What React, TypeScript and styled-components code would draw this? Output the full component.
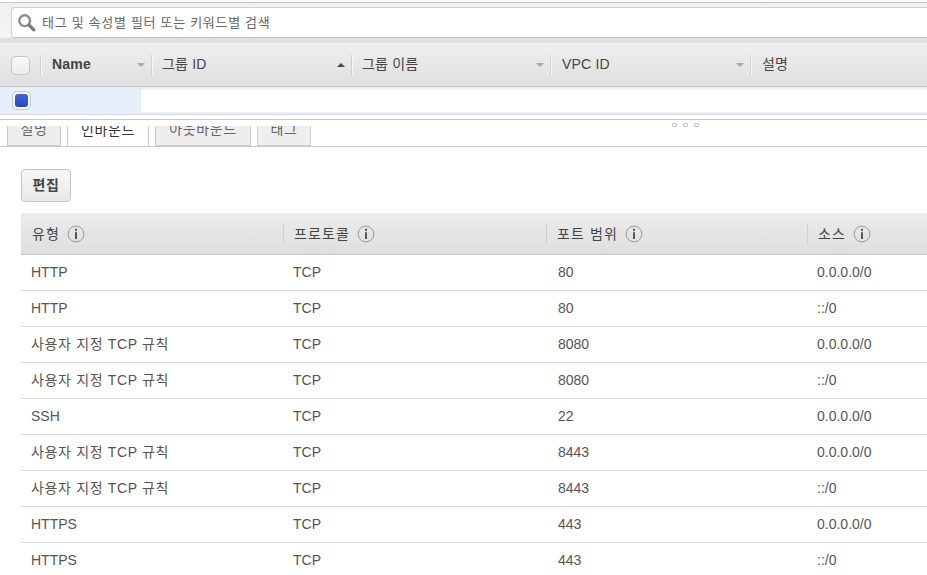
import React from "react";
import styled, { createGlobalStyle } from "styled-components";

const Global = createGlobalStyle`
  html, body { margin: 0; padding: 0; height: 575px; overflow: hidden; background: #fff; }
  body { font-family: "Liberation Sans", "Noto Sans CJK KR", sans-serif; color: #444; }
`;

const Page = styled.div`
  width: 927px;
  height: 575px;
  overflow: hidden;
  display: flex;
  flex-direction: column;
  & > * { flex: none; }
`;

const SearchBand = styled.div`
  margin-top: 2px;
  height: 41px;
  box-sizing: border-box;
  background: linear-gradient(#f0f0f0 0, #f4f4f4 35px, #dfdfdf 35px);
  border-top: 1px solid #c8c8c8;
  padding: 4px 0 0 11px;
`;

const SearchBox = styled.div`
  height: 31px;
  box-sizing: border-box;
  background: #fff;
  border: 1px solid #d0d0d0;
  border-bottom-color: #c4c4c4;
  border-right: none;
  border-radius: 4px 0 0 4px;
  display: flex;
  align-items: center;
  gap: 6px;
  padding-left: 6px;
  font-size: 13px;
  line-height: 16px;
  color: #666;
  letter-spacing: 0.7px;
`;

const HeaderGrid = styled.div`
  display: grid;
  grid-template-columns: 40px 111px 200px 199px 200px 1fr;
  height: 44px;
  box-sizing: border-box;
  border-top: 1px solid #f4f4f4;
  border-bottom: 1px solid #c4c4c4;
  background: linear-gradient(#efefef, #dfdfdf);
`;

const HeadCell = styled.div<{ $first?: boolean }>`
  display: flex;
  align-items: center;
  justify-content: space-between;
  height: 20px;
  margin-top: 11px;
  padding: 0 6px 0 11px;
  border-left: 1px solid #cfcfcf;
  font-size: 14px;
  line-height: 16px;
  font-weight: ${(p) => (p.$first ? 700 : 400)};
  color: #444;
  box-shadow: inset 1px 0 0 #f6f6f6;
`;

const HeadLabel = styled.span<{ $pull?: boolean }>`
  letter-spacing: 0.2px;
  margin-left: ${(p) => (p.$pull ? "-1px" : "0")};
  margin-top: -2px;
`;

const CheckCell = styled.div`
  display: flex;
  align-items: center;
  padding-left: 11px;
`;

const Check = styled.span<{ $on?: boolean }>`
  width: 19px;
  height: 19px;
  box-sizing: border-box;
  border: 1px solid #c6c6c6;
  border-radius: 5px;
  background: ${(p) => (p.$on ? "#f3f3f3" : "linear-gradient(#f9f9f9,#ececec)")};
  display: flex;
  align-items: center;
  justify-content: center;
`;

const CheckDot = styled.span`
  width: 13px;
  height: 13px;
  border-radius: 3px;
  background: linear-gradient(#3d66d6, #2446c0);
`;

const Arrow = styled.span<{ $up?: boolean }>`
  width: 0;
  height: 0;
  border-left: 4px solid transparent;
  border-right: 4px solid transparent;
  ${(p) => (p.$up ? "border-bottom: 4px solid #444;" : "border-top: 4px solid #aaa;")}
`;

const SelectedRow = styled.div`
  height: 28px;
  box-sizing: border-box;
  background: #e7effb;
  padding: 2px 0;
  border-bottom: 1px solid #d3d9e2;
  display: flex;
`;

const SelectedName = styled.div`
  width: 141px;
  padding-left: 12px;
  box-sizing: border-box;
  display: flex;
  align-items: center;
`;

const SelectedRest = styled.div`
  flex: 1;
  background: #fff;
`;

const Splitter = styled.div`
  position: relative;
  margin-top: 4px;
  height: 1px;
  background: #c8c8c8;
`;

const Grips = styled.div`
  position: absolute;
  left: 672px;
  top: 4px;
  display: flex;
  gap: 6px;
`;

const Grip = styled.span`
  width: 3px;
  height: 2px;
  border: 1px solid #c4c4c4;
  border-radius: 1px;
`;

const TabStrip = styled.div`
  height: 21px;
  margin-top: 6px;
  box-sizing: border-box;
  overflow: hidden;
  border-bottom: 1px solid #c8c8c8;
  display: flex;
  align-items: flex-end;
  padding-left: 7px;
  gap: 6px;
`;

const Tab = styled.div<{ $active?: boolean; $w: number }>`
  width: ${(p) => p.$w}px;
  height: 36px;
  flex: none;
  box-sizing: border-box;
  padding-top: 10px;
  margin-bottom: ${(p) => (p.$active ? "-1px" : "0")};
  background: ${(p) => (p.$active ? "#fff" : "#eee")};
  border: 1px solid #ccc;
  border-bottom: ${(p) => (p.$active ? "none" : "1px solid #ccc")};
  text-align: center;
  font-size: 14px;
  line-height: 16px;
  letter-spacing: 0.6px;
  color: ${(p) => (p.$active ? "#333" : "#666")};
`;

const Toolbar = styled.div`
  padding: 22px 0 11px 21px;
`;

const EditButton = styled.button`
  display: block;
  width: 50px;
  height: 33px;
  padding: 0 0 2px;
  border: 1px solid #c6c6c6;
  border-radius: 4px;
  background: linear-gradient(#f7f7f7, #e9e9e9);
  font: 700 14px/16px "Liberation Sans", "Noto Sans CJK KR", sans-serif;
  letter-spacing: 0.6px;
  color: #444;
`;

const RuleTable = styled.div`
  margin-left: 21px;
  display: flex;
  flex-direction: column;
`;

const RuleHead = styled.div`
  display: grid;
  grid-template-columns: 262px 263px 261px 1fr;
  height: 42px;
  box-sizing: border-box;
  border-bottom: 1px solid #c4c4c4;
  background: linear-gradient(#ececec, #dedede);
  align-items: center;
`;

const RuleHeadCell = styled.div<{ $first?: boolean }>`
  display: flex;
  align-items: center;
  gap: 7px;
  height: 20px;
  padding-left: 10px;
  border-left: 1px solid ${(p) => (p.$first ? "transparent" : "#cfcfcf")};
  font-size: 14px;
  line-height: 16px;
  color: #444;
  letter-spacing: 1.1px;
`;

const RuleRow = styled.div`
  display: grid;
  grid-template-columns: 262px 265px 259px 1fr;
  height: 36px;
  flex: none;
  box-sizing: border-box;
  border-bottom: 1px solid #ddd;
  align-items: center;
  font-size: 14px;
  line-height: 16px;
  color: #555;
`;

const RuleCell = styled.div<{ $wide?: boolean }>`
  padding: 0 0 2px 10px;
  letter-spacing: ${(p) => (p.$wide ? "0.65px" : "0")};
`;

const InfoIcon = () => (
  <svg width="18" height="18" viewBox="0 0 18 18" aria-hidden="true">
    <circle cx="9" cy="9" r="7.9" fill="none" stroke="#9a9a9a" strokeWidth="1" />
    <rect x="8" y="7.2" width="2" height="6.8" fill="#555" />
    <rect x="8" y="3.8" width="2" height="2" fill="#555" />
  </svg>
);

const SearchIcon = () => (
  <svg width="18" height="18" viewBox="0 0 18 18" aria-hidden="true">
    <circle cx="6.7" cy="6.7" r="5.4" fill="none" stroke="#8c8c8c" strokeWidth="2.4" />
    <path d="M11 11 L15.8 15.8" stroke="#7a7a7a" strokeWidth="3.2" strokeLinecap="round" />
  </svg>
);

const columns = [
  { label: "Name", first: true },
  { label: "그룹 ID", up: true, pull: true },
  { label: "그룹 이름", pull: true },
  { label: "VPC ID" },
  { label: "설명", none: true },
];

const rules = [
  ["HTTP", "TCP", "80", "0.0.0.0/0"],
  ["HTTP", "TCP", "80", "::/0"],
  ["사용자 지정 TCP 규칙", "TCP", "8080", "0.0.0.0/0"],
  ["사용자 지정 TCP 규칙", "TCP", "8080", "::/0"],
  ["SSH", "TCP", "22", "0.0.0.0/0"],
  ["사용자 지정 TCP 규칙", "TCP", "8443", "0.0.0.0/0"],
  ["사용자 지정 TCP 규칙", "TCP", "8443", "::/0"],
  ["HTTPS", "TCP", "443", "0.0.0.0/0"],
  ["HTTPS", "TCP", "443", "::/0"],
];

const tabs = [
  { label: "설명", w: 54 },
  { label: "인바운드", w: 82, active: true },
  { label: "아웃바운드", w: 96 },
  { label: "태그", w: 54 },
];

export default function App() {
  return (
    <Page>
      <Global />
      <SearchBand>
        <SearchBox>
          <SearchIcon />
          태그 및 속성별 필터 또는 키워드별 검색
        </SearchBox>
      </SearchBand>
      <HeaderGrid>
        <CheckCell>
          <Check />
        </CheckCell>
        {columns.map((c) => (
          <HeadCell key={c.label} $first={c.first}>
            <HeadLabel $pull={c.pull}>{c.label}</HeadLabel>
            {!c.none && <Arrow $up={c.up} />}
          </HeadCell>
        ))}
      </HeaderGrid>
      <SelectedRow>
        <SelectedName>
          <Check $on>
            <CheckDot />
          </Check>
        </SelectedName>
        <SelectedRest />
      </SelectedRow>
      <Splitter>
        <Grips>
          <Grip />
          <Grip />
          <Grip />
        </Grips>
      </Splitter>
      <TabStrip>
        {tabs.map((t) => (
          <Tab key={t.label} $w={t.w} $active={t.active}>
            {t.label}
          </Tab>
        ))}
      </TabStrip>
      <Toolbar>
        <EditButton>편집</EditButton>
      </Toolbar>
      <RuleTable>
        <RuleHead>
          {["유형", "프로토콜", "포트 범위", "소스"].map((h, i) => (
            <RuleHeadCell key={h} $first={i === 0}>
              {h}
              <InfoIcon />
            </RuleHeadCell>
          ))}
        </RuleHead>
        {rules.map((r, i) => (
          <RuleRow key={i}>
            {r.map((v, j) => (
              <RuleCell key={j} $wide={j === 0 && v.length > 6}>
                {v}
              </RuleCell>
            ))}
          </RuleRow>
        ))}
      </RuleTable>
    </Page>
  );
}
